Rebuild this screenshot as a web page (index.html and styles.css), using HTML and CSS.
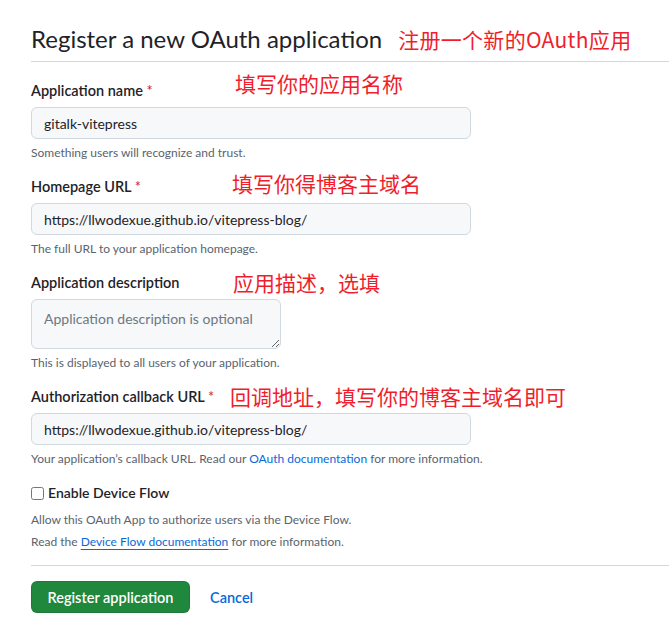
FILE: index.html
```html
<!DOCTYPE html>
<html>
<head>
  <meta charset="UTF-8">
  <title>Register a new OAuth application</title>
  <meta name="viewport" content="width=device-width">
  <link rel="stylesheet" href="styles.css">
</head>
<body>
<div class="page">
  <div class="subhead">
    <h2>Register a new OAuth application</h2>
    <span class="mark mark-title">注册一个新的OAuth应用</span>
  </div>

  <form class="appForm">
    <dl class="field">
      <dt class="labelRow">
        <label>Application name <span class="req">*</span></label>
        <span class="mark mark-name">填写你的应用名称</span>
      </dt>
      <dd>
        <input class="input" type="text" value="gitalk-vitepress">
        <p class="note">Something users will recognize and trust.</p>
      </dd>
    </dl>

    <dl class="field">
      <dt class="labelRow">
        <label>Homepage URL <span class="req">*</span></label>
        <span class="mark mark-home">填写你得博客主域名</span>
      </dt>
      <dd>
        <input class="input" type="text" value="https://llwodexue.github.io/vitepress-blog/">
        <p class="note">The full URL to your application homepage.</p>
      </dd>
    </dl>

    <dl class="field">
      <dt class="labelRow">
        <label>Application description</label>
        <span class="mark mark-desc">应用描述，选填</span>
      </dt>
      <dd>
        <textarea class="input textarea" placeholder="Application description is optional"></textarea>
        <p class="note">This is displayed to all users of your application.</p>
      </dd>
    </dl>

    <dl class="field">
      <dt class="labelRow">
        <label>Authorization callback URL <span class="req">*</span></label>
        <span class="mark mark-cb">回调地址，填写你的博客主域名即可</span>
      </dt>
      <dd>
        <input class="input" type="text" value="https://llwodexue.github.io/vitepress-blog/">
        <p class="note">Your application’s callback URL. Read our <a href="#">OAuth documentation</a> for more information.</p>
      </dd>
    </dl>

    <div class="checkField">
      <label class="checkLabel"><input type="checkbox"> Enable Device Flow</label>
      <p class="note">Allow this OAuth App to authorize users via the Device Flow.</p>
      <p class="note">Read the <a class="underline" href="#">Device Flow documentation</a> for more information.</p>
    </div>

    <div class="actions">
      <button class="btnPrimary" type="button">Register application</button>
      <a class="cancel" href="#">Cancel</a>
    </div>
  </form>
</div>
</body>
</html>
```

FILE: styles.css
```css
body {
  margin: 0;
  font-family: Lato, "Noto Sans CJK SC", sans-serif;
  font-size: 14px;
  color: #1f2328;
  background: #fff;
}
a {
  color: #0969da;
  text-decoration: none;
}
.page {
  padding-left: 31px;
}
.subhead {
  display: flex;
  align-items: center;
  margin-top: 21px;
  padding-bottom: 4px;
  border-bottom: 1px solid #d1d9e0;
}
.subhead h2 {
  margin: 0;
  font-size: 24px;
  font-weight: 400;
  line-height: 36px;
}
.mark {
  color: #f01e2c;
  font-family: "Noto Sans CJK SC", sans-serif;
  font-size: 21px;
  line-height: 28px;
  white-space: nowrap;
}
.mark-title {
  margin-left: 16px;
  letter-spacing: 0.3px;
}
.appForm {
  padding-top: 19px;
}
.field {
  margin: 0 0 15px;
}
.field dd {
  margin: 0;
}
.labelRow {
  display: flex;
  align-items: center;
  height: 20px;
  margin-bottom: 6px;
}
.labelRow label {
  width: 201px;
  flex: none;
  font-size: 14.5px;
  font-weight: 600;
  line-height: 20px;
}
.req {
  color: #d1242f;
  font-weight: 400;
}
.mark-name { margin-left: 3px; margin-top: -16px; }
.mark-home { margin-top: -8px; }
.mark-desc { margin-left: 1px; margin-top: -2px; }
.mark-cb { margin-left: -2px; margin-top: -2px; }
.input {
  display: block;
  box-sizing: border-box;
  width: 440px;
  height: 32px;
  padding: 5px 12px;
  margin: 0;
  font-family: inherit;
  font-size: 14px;
  color: #1f2328;
  background: #f6f8fa;
  border: 1px solid #d1d9e0;
  border-radius: 6px;
}
.textarea {
  width: 250px;
  height: 50px;
  padding-top: 10px;
  resize: vertical;
}
.textarea::placeholder {
  color: #6e7781;
}
.note {
  margin: 5px 0 0;
  font-size: 12px;
  line-height: 18px;
  color: #59636e;
}
.checkLabel {
  display: flex;
  align-items: center;
  font-size: 14px;
  font-weight: 600;
  line-height: 20px;
}
.checkLabel input {
  width: 13px;
  height: 13px;
  margin: 0 4px 0 0;
}
.checkField .note {
  margin-top: 6px;
  line-height: 22px;
}
.checkField .note + .note {
  margin-top: 0;
}
.underline {
  text-decoration: underline;
  text-underline-offset: 3px;
}
.actions {
  display: flex;
  align-items: center;
  margin-top: 12px;
  padding-top: 15px;
  border-top: 1px solid #d1d9e0;
}
.btnPrimary {
  height: 32px;
  width: 159px;
  padding: 0;
  white-space: nowrap;
  font-family: inherit;
  font-size: 14.5px;
  font-weight: 600;
  color: #fff;
  background: #1f883d;
  border: 1px solid rgba(31, 35, 40, 0.15);
  border-radius: 6px;
}
.cancel {
  margin-left: 20px;
  font-size: 14.5px;
  font-weight: 600;
}
```
